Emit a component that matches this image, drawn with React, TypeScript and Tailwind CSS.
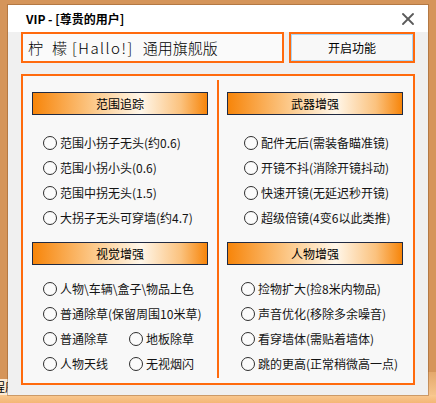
import { X } from "lucide-react";

const ORANGE = "border-[#ff6a0d]";

const Radio = ({ label, className = "" }: { label: string; className?: string }) => (
  <div className={`flex items-center h-[25px] ${className}`}>
    <span className="w-[14px] h-[14px] shrink-0 rounded-full border-[1.5px] border-[#2e2e2e] bg-[#fbfbfb]" />
    <span className="ml-[3px] whitespace-nowrap text-[12px] text-[#141414] leading-none">{label}</span>
  </div>
);

const SectionHeader = ({ title }: { title: string }) => (
  <div className="w-[176px] h-[23px] border border-[#202a42] bg-[linear-gradient(to_right,#f7850a_0%,#fcc98a_35%,#fff7ea_62%,#fbc27e_85%,#f7850a_100%)] flex items-center justify-center text-[12px] text-black leading-none">
    {title}
  </div>
);

export default function App() {
  return (
    <div className="relative w-[436px] h-[403px] overflow-hidden bg-[#d5955a] font-['Noto_Sans_CJK_SC','Noto_Sans',sans-serif]">
      {/* bit of a window behind */}
      <div className="absolute left-0 top-[379px] w-[8px] h-[16px] overflow-hidden bg-[#fcebd6] text-[12px] leading-[16px] text-black">
        <span className="ml-[-7px] whitespace-nowrap">程序</span>
      </div>
      <div className="absolute left-0 bottom-0 w-full h-[8px] bg-[linear-gradient(to_bottom,#f9c990,#f4b676)]" />
      <div className="absolute right-0 top-[372px] w-[8px] h-[23px] bg-[linear-gradient(to_bottom,#e4a86c,#f6c48c)]" />

      <div className="relative pt-[5px] pl-[8px]">
        <div className="w-[420px] h-[390px] bg-[#f0f0f0] shadow-[0_0_0_1px_rgba(120,70,30,0.35)]">
          {/* title bar */}
          <div className="h-[27px] bg-white flex items-center justify-between pl-[18px] pr-[10px]">
            <span className="text-[12px] font-bold text-black leading-none">VIP - [尊贵的用户]</span>
            <X size={20} strokeWidth={2.2} className="text-[#5a5a5a]" />
          </div>

          <div className="px-[13px]">
            {/* top row */}
            <div className="flex gap-[5px] h-[31px]">
              <div className={`w-[263px] h-full border-2 ${ORANGE} bg-[#fafafa] flex items-center pl-[5px] text-[15px] font-light text-black leading-none whitespace-nowrap`}>
                <span>柠</span>
                <span className="ml-[9px]">檬</span>
                <span className="ml-[5px] tracking-[1.5px]">[Hallo!]</span>
                <span className="ml-[9px]">通用旗舰版</span>
              </div>
              <div className={`w-[126px] h-full border-2 ${ORANGE}`}>
                <div className="w-full h-full border border-[#a9d4f6] bg-[#f8f8f8] flex items-center justify-center text-[12px] text-black leading-none">
                  开启功能
                </div>
              </div>
            </div>

            {/* main panel */}
            <div className={`mt-[11px] w-[394px] h-[311px] border-2 ${ORANGE} bg-[#f8f8f8] flex`}>
              <div className="w-[194px] pl-[9px] pt-[16px]">
                <SectionHeader title="范围追踪" />
                <div className="mt-[15px] pl-[11px]">
                  <Radio label="范围小拐子无头(约0.6)" />
                  <Radio label="范围小拐小头(0.6)" />
                  <Radio label="范围中拐无头(1.5)" />
                  <Radio label="大拐子无头可穿墙(约4.7)" />
                </div>
                <div className="mt-[12px]">
                  <SectionHeader title="视觉增强" />
                </div>
                <div className="mt-[11px] pl-[11px]">
                  <Radio label="人物\车辆\盒子\物品上色" />
                  <Radio label="普通除草(保留周围10米草)" />
                  <div className="flex">
                    <Radio label="普通除草" className="w-[86px]" />
                    <Radio label="地板除草" />
                  </div>
                  <div className="flex">
                    <Radio label="人物天线" className="w-[86px]" />
                    <Radio label="无视烟闪" />
                  </div>
                </div>
              </div>

              <div className="w-[2px] mt-[4px] h-[298px] bg-[#ff6a0d]" />

              <div className="w-[194px] pl-[8px] pt-[16px]">
                <SectionHeader title="武器增强" />
                <div className="mt-[15px] pl-[17px]">
                  <Radio label="配件无后(需装备瞄准镜)" />
                  <Radio label="开镜不抖(消除开镜抖动)" />
                  <Radio label="快速开镜(无延迟秒开镜)" />
                  <Radio label="超级倍镜(4变6以此类推)" />
                </div>
                <div className="mt-[12px]">
                  <SectionHeader title="人物增强" />
                </div>
                <div className="mt-[11px] pl-[14px]">
                  <Radio label="捡物扩大(捡8米内物品)" />
                  <Radio label="声音优化(移除多余噪音)" />
                  <Radio label="看穿墙体(需贴着墙体)" />
                  <Radio label="跳的更高(正常稍微高一点)" />
                </div>
              </div>
            </div>
          </div>
        </div>
      </div>
    </div>
  );
}
